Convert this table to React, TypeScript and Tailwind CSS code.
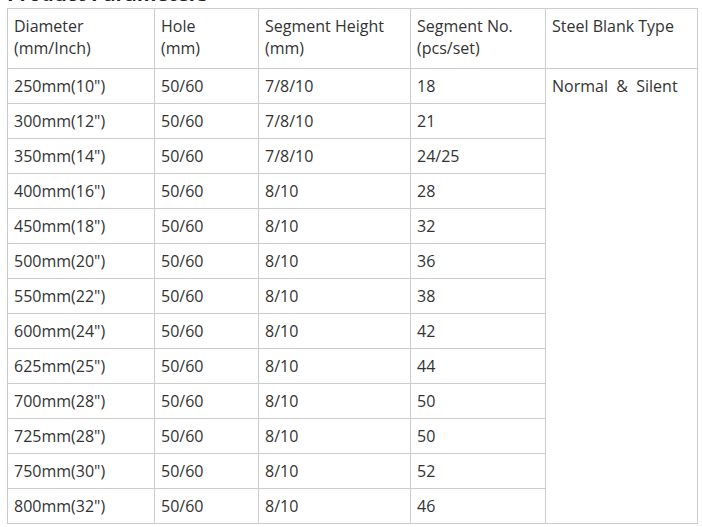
import React from "react";

const rows: [string, string, string, string][] = [
  ["250mm(10\")", "50/60", "7/8/10", "18"],
  ["300mm(12\")", "50/60", "7/8/10", "21"],
  ["350mm(14\")", "50/60", "7/8/10", "24/25"],
  ["400mm(16\")", "50/60", "8/10", "28"],
  ["450mm(18\")", "50/60", "8/10", "32"],
  ["500mm(20\")", "50/60", "8/10", "36"],
  ["550mm(22\")", "50/60", "8/10", "38"],
  ["600mm(24\")", "50/60", "8/10", "42"],
  ["625mm(25\")", "50/60", "8/10", "44"],
  ["700mm(28\")", "50/60", "8/10", "50"],
  ["725mm(28\")", "50/60", "8/10", "50"],
  ["750mm(30\")", "50/60", "8/10", "52"],
  ["800mm(32\")", "50/60", "8/10", "46"],
];

const cell = "border border-[#cccccc] px-[6px] pt-[6px] pb-0 align-top text-left font-normal";

export default function App() {
  return (
    <div className="flex flex-col pl-[7px] w-[702px] bg-white text-[#333333] [font-family:'Open_Sans',sans-serif]">
      <h2 className="-mt-[20px] h-[28px] leading-[28px] text-[20px] font-bold text-[#222222] whitespace-nowrap">
        Product Parameters
      </h2>
      <table className="table-fixed border-collapse w-[690px] text-[16px] leading-[22px]">
        <colgroup>
          <col className="w-[147px]" />
          <col className="w-[104px]" />
          <col className="w-[152px]" />
          <col className="w-[135px]" />
          <col className="w-[152px]" />
        </colgroup>
        <thead>
          <tr className="h-[60px]">
            <th className={cell}>Diameter<br />(mm/Inch)</th>
            <th className={cell}>Hole<br />(mm)</th>
            <th className={cell}>Segment Height<br />(mm)</th>
            <th className={cell}>Segment No.<br />(pcs/set)</th>
            <th className={cell}>Steel Blank Type</th>
          </tr>
        </thead>
        <tbody>
          {rows.map((r, i) => (
            <tr key={i} className="h-[35px]">
              <td className={cell}>{r[0]}</td>
              <td className={cell}>{r[1]}</td>
              <td className={cell}>{r[2]}</td>
              <td className={cell}>{r[3]}</td>
              {i === 0 && (
                <td rowSpan={13} className={cell}>
                  Normal&nbsp; &amp;&nbsp; Silent
                </td>
              )}
            </tr>
          ))}
        </tbody>
      </table>
    </div>
  );
}
